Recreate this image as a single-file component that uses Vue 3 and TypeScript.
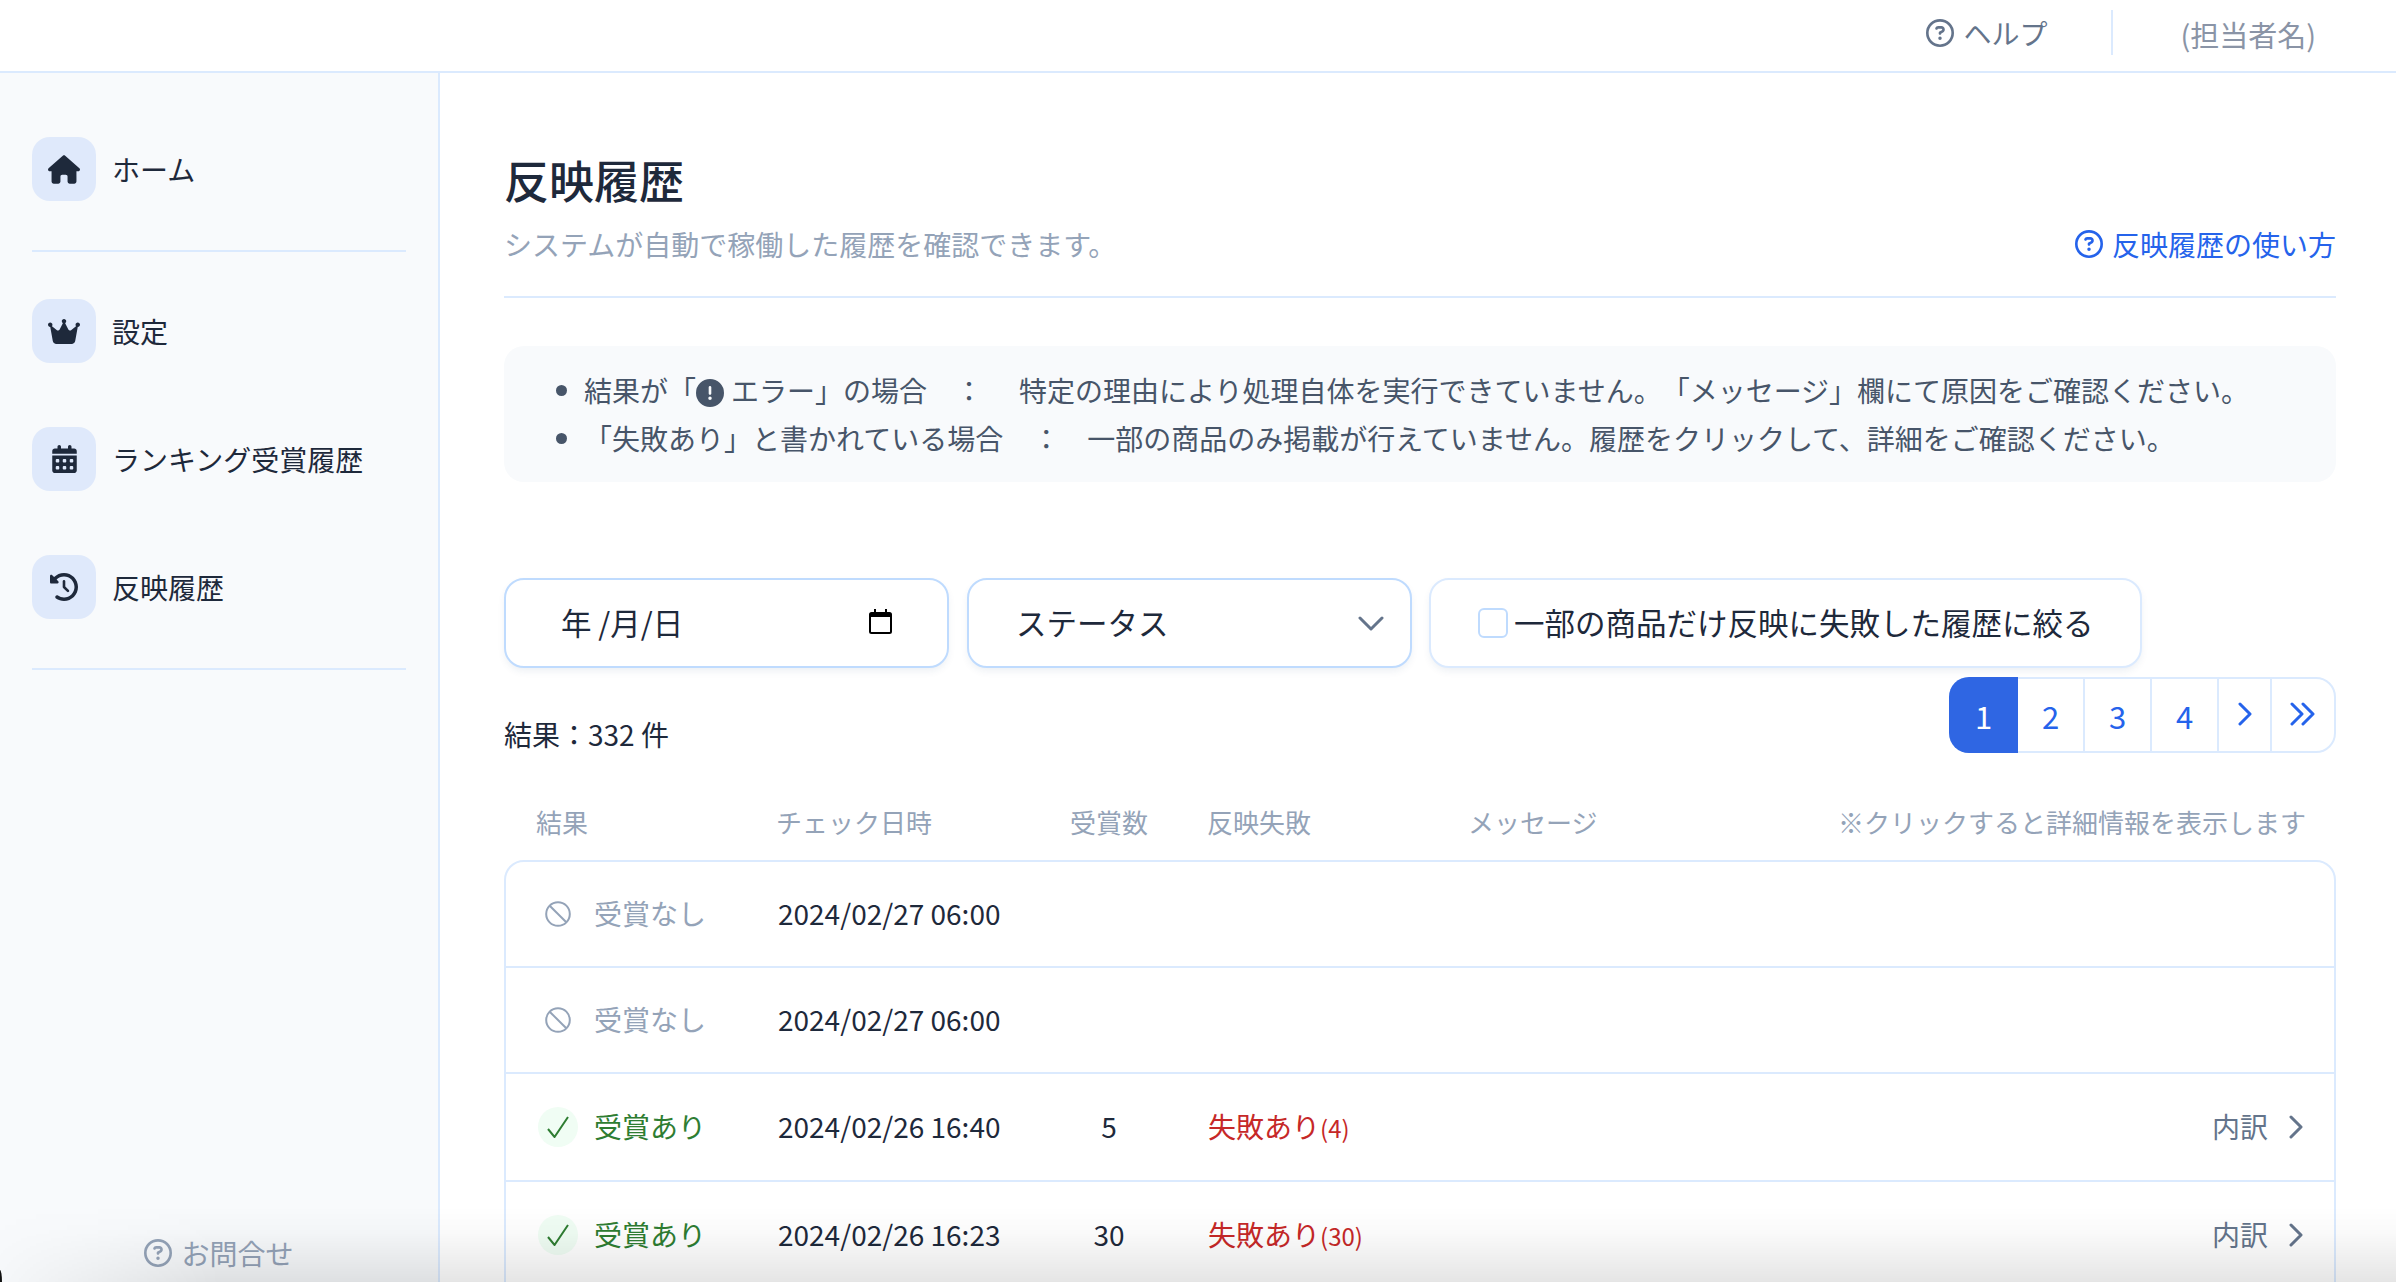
<script setup lang="ts">
interface Row {
  won: boolean
  date: string
  count?: number
  failed?: number
}
const rows: Row[] = [
  { won: false, date: '2024/02/27 06:00' },
  { won: false, date: '2024/02/27 06:00' },
  { won: true, date: '2024/02/26 16:40', count: 5, failed: 4 },
  { won: true, date: '2024/02/26 16:23', count: 30, failed: 30 },
]
const question =
  'M464 256A208 208 0 1 0 48 256a208 208 0 1 0 416 0zM0 256a256 256 0 1 1 512 0A256 256 0 1 1 0 256zm169.8-90.7c7.9-22.3 29.1-37.3 52.8-37.3h58.3c34.9 0 63.1 28.3 63.1 63.1c0 22.6-12.1 43.5-31.7 54.8L280 264.4c-.2 13-10.9 23.6-24 23.6c-13.3 0-24-10.7-24-24V250.5c0-8.6 4.6-16.5 12.1-20.8l44.3-25.4c4.7-2.7 7.6-7.7 7.6-13.1c0-8.4-6.8-15.1-15.1-15.1H222.6c-3.4 0-6.4 2.1-7.5 5.3l-.4 1.2c-4.4 12.5-18.2 19-30.6 14.6s-19-18.2-14.6-30.6l.4-1.2zM224 352a32 32 0 1 1 64 0 32 32 0 1 1 -64 0z'
const pages = ['1', '2', '3', '4']
</script>

<template>
  <div class="page">
    <header class="topbar">
      <a class="help">
        <svg class="q" viewBox="0 0 512 512"><path :d="question" fill="currentColor" /></svg>
        <span>ヘルプ</span>
      </a>
      <div class="vr"></div>
      <div class="user">(担当者名)</div>
    </header>

    <div class="body">
      <aside class="sidebar">
        <a class="nav">
          <span class="nav-ico"><svg class="i-wide" viewBox="0 0 576 512"><path fill="currentColor" d="M575.8 255.5c0 18-15 32.1-32 32.1h-32l.7 160.2c0 2.7-.2 5.4-.5 8.1V472c0 22.1-17.9 40-40 40H456c-1.1 0-2.2 0-3.3-.1c-1.4 .1-2.8 .1-4.2 .1H416 392c-22.1 0-40-17.9-40-40V448 384c0-17.7-14.3-32-32-32H256c-17.7 0-32 14.3-32 32v64 24c0 22.1-17.9 40-40 40H160 128.1c-1.5 0-3-.1-4.5-.2c-1.2 .1-2.4 .2-3.6 .2H104c-22.1 0-40-17.9-40-40V360c0-.9 0-1.9 .1-2.8V287.6H32c-18 0-32-14-32-32.1c0-9 3-17 10-24L266.4 8c7-7 15-8 22-8s15 2 21 7L564.8 231.5c8 7 12 15 11 24z" /></svg></span>
          <span>ホーム</span>
        </a>
        <div class="hr first"></div>
        <div class="nav-group">
          <a class="nav">
            <span class="nav-ico"><svg class="i-wide" viewBox="0 0 576 512"><path fill="currentColor" d="M309 106c11.4-7 19-19.7 19-34c0-22.1-17.9-40-40-40s-40 17.9-40 40c0 14.4 7.6 27 19 34L209.7 220.6c-9.1 18.2-32.7 23.4-48.6 10.7L72 160c5-6.7 8-15 8-24c0-22.1-17.9-40-40-40S0 113.9 0 136s17.9 40 40 40c.2 0 .5 0 .7 0L86.4 427.4c5.5 30.4 32 52.6 63 52.6H426.6c30.9 0 57.4-22.1 63-52.6L535.3 176c.2 0 .5 0 .7 0c22.1 0 40-17.9 40-40s-17.9-40-40-40s-40 17.9-40 40c0 9 3 17.3 8 24l-89.1 71.3c-15.9 12.7-39.5 7.5-48.6-10.7L309 106z" /></svg></span>
            <span>設定</span>
          </a>
          <a class="nav">
            <span class="nav-ico"><svg class="i-cal" viewBox="0 0 448 512"><path fill="currentColor" d="M128 0c17.7 0 32 14.3 32 32V64H288V32c0-17.7 14.3-32 32-32s32 14.3 32 32V64h48c26.5 0 48 21.5 48 48v48H0V112C0 85.5 21.5 64 48 64H96V32c0-17.7 14.3-32 32-32zM0 192H448V464c0 26.5-21.5 48-48 48H48c-26.5 0-48-21.5-48-48V192zm64 80v32c0 8.8 7.2 16 16 16h32c8.8 0 16-7.2 16-16V272c0-8.8-7.2-16-16-16H80c-8.8 0-16 7.2-16 16zm128 0v32c0 8.8 7.2 16 16 16h32c8.8 0 16-7.2 16-16V272c0-8.8-7.2-16-16-16H208c-8.8 0-16 7.2-16 16zm144-16c-8.8 0-16 7.2-16 16v32c0 8.8 7.2 16 16 16h32c8.8 0 16-7.2 16-16V272c0-8.8-7.2-16-16-16H336zM64 400v32c0 8.8 7.2 16 16 16h32c8.8 0 16-7.2 16-16V400c0-8.8-7.2-16-16-16H80c-8.8 0-16 7.2-16 16zm144-16c-8.8 0-16 7.2-16 16v32c0 8.8 7.2 16 16 16h32c8.8 0 16-7.2 16-16V400c0-8.8-7.2-16-16-16H208zm112 16v32c0 8.8 7.2 16 16 16h32c8.8 0 16-7.2 16-16V400c0-8.8-7.2-16-16-16H336c-8.8 0-16 7.2-16 16z" /></svg></span>
            <span>ランキング受賞履歴</span>
          </a>
          <a class="nav">
            <span class="nav-ico"><svg class="i-hist" viewBox="0 0 512 512"><path fill="currentColor" d="M75 75L41 41C25.9 25.9 0 36.6 0 57.9V168c0 13.3 10.7 24 24 24H134.1c21.4 0 32.1-25.9 17-41l-30.8-30.8C155 85.5 203 64 256 64c106 0 192 86 192 192s-86 192-192 192c-40.8 0-78.6-12.7-109.7-34.4c-14.5-10.1-34.4-6.6-44.6 7.9s-6.6 34.4 7.9 44.6C151.2 495 201.7 512 256 512c141.4 0 256-114.6 256-256S397.4 0 256 0C185.3 0 121.3 28.7 75 75zm181 53c-13.3 0-24 10.7-24 24V256c0 6.4 2.5 12.5 7 17l72 72c9.4 9.4 24.6 9.4 33.9 0s9.4-24.6 0-33.9l-65-65V152c0-13.3-10.7-24-24-24z" /></svg></span>
            <span>反映履歴</span>
          </a>
        </div>
        <div class="hr last"></div>
        <a class="contact">
          <svg class="q" viewBox="0 0 512 512"><path :d="question" fill="currentColor" /></svg>
          <span>お問合せ</span>
        </a>
      </aside>

      <main class="main">
        <h1 class="title">反映履歴</h1>
        <div class="subrow">
          <p class="sub">システムが自動で稼働した履歴を確認できます。</p>
          <a class="howto">
            <svg class="q" viewBox="0 0 512 512"><path :d="question" fill="currentColor" /></svg>
            <span>反映履歴の使い方</span>
          </a>
        </div>

        <ul class="notice">
          <li>
            <span>結果が「<svg class="err" viewBox="0 0 512 512"><path fill="currentColor" d="M256 512A256 256 0 1 0 256 0a256 256 0 1 0 0 512zm0-384c13.3 0 24 10.7 24 24V264c0 13.3-10.7 24-24 24s-24-10.7-24-24V152c0-13.3 10.7-24 24-24zM224 352a32 32 0 1 1 64 0 32 32 0 1 1 -64 0z" /></svg>エラー」の場合</span>
            <span class="colon first-colon">：</span>
            <span>特定の理由により処理自体を実行できていません。「メッセージ」欄にて原因をご確認ください。</span>
          </li>
          <li>
            <span>「失敗あり」と書かれている場合</span>
            <span class="colon">：</span>
            <span>一部の商品のみ掲載が行えていません。履歴をクリックして、詳細をご確認ください。</span>
          </li>
        </ul>

        <div class="filters">
          <div class="field date">
            <span class="label">年 /月/日</span>
            <svg class="cal" viewBox="0 0 23 25"><path d="M5 0h2v3h9V0h2v3h2.5A2.5 2.5 0 0 1 23 5.500v17a2.500 2.500 0 0 1-2.500 2.500h-18A2.500 2.500 0 0 1 0 22.500v-17A2.500 2.500 0 0 1 2.500 3H5zM2 8v14.500a.5.5 0 0 0 .5.5h18a.5.5 0 0 0 .5-.5V8z" fill="#000" /></svg>
          </div>
          <div class="field status">
            <span class="label">ステータス</span>
            <svg class="caret" viewBox="0 0 26 15"><path d="M2 2l11 11L24 2" fill="none" stroke="#64748b" stroke-width="3" stroke-linecap="round" stroke-linejoin="round" /></svg>
          </div>
          <label class="field check">
            <span class="box"></span>
            <span class="label">一部の商品だけ反映に失敗した履歴に絞る</span>
          </label>
        </div>

        <div class="resultbar">
          <div class="count">結果：332 件</div>
          <nav class="pager">
            <a v-for="(p, i) in pages" :key="p" class="cell" :class="{ active: i === 0 }">{{ p }}</a>
            <a class="cell next">
              <svg viewBox="0 0 14 24"><path d="M2 2l10 10L2 22" fill="none" stroke="currentColor" stroke-width="3" stroke-linecap="round" stroke-linejoin="round" /></svg>
            </a>
            <a class="cell last">
              <svg viewBox="0 0 26 24"><path d="M2 2l10 10L2 22M13 2l10 10-10 10" fill="none" stroke="currentColor" stroke-width="3" stroke-linecap="round" stroke-linejoin="round" /></svg>
            </a>
          </nav>
        </div>

        <div class="thead">
          <div class="h1">結果</div>
          <div>チェック日時</div>
          <div class="center">受賞数</div>
          <div class="h4">反映失敗</div>
          <div>メッセージ</div>
          <div class="right">※クリックすると詳細情報を表示します</div>
        </div>

        <div class="table">
          <div v-for="(r, i) in rows" :key="i" class="row" :class="{ won: r.won }">
            <div class="result">
              <span class="state">
                <svg v-if="!r.won" class="ban" viewBox="0 0 26 26"><circle cx="13" cy="13" r="11.800" fill="none" stroke="currentColor" stroke-width="2" /><path d="M4.700 4.700l16.600 16.600" stroke="currentColor" stroke-width="2" /></svg>
                <svg v-else class="tick" viewBox="0 0 22 22"><path d="M1 13l6.500 8L21 1" fill="none" stroke="currentColor" stroke-width="2" /></svg>
              </span>
              <span class="lift">{{ r.won ? '受賞あり' : '受賞なし' }}</span>
            </div>
            <div class="when lift">{{ r.date }}</div>
            <div class="center num lift">{{ r.count }}</div>
            <div class="fail lift"><template v-if="r.failed">失敗あり<small>({{ r.failed }})</small></template></div>
            <div></div>
            <div class="detail" v-if="r.won">
              <span class="lift">内訳</span>
              <svg viewBox="0 0 14 24"><path d="M2 2l10 10L2 22" fill="none" stroke="currentColor" stroke-width="3" stroke-linecap="round" stroke-linejoin="round" /></svg>
            </div>
          </div>
        </div>
      </main>
    </div>
    <div class="fade"></div>
    <div class="corner"></div>
  </div>
</template>

<style>
html,
body {
  margin: 0;
  background: #fff;
}
</style>

<style scoped>
.page {
  position: relative;
  width: 2396px;
  height: 1282px;
  overflow: hidden;
  background: #fff;
  display: flex;
  flex-direction: column;
  font-family: "Noto Sans CJK JP", "Noto Sans", sans-serif;
  font-size: 28px;
  text-spacing-trim: space-all;
  color: #1e293b;
}
a {
  color: inherit;
}
.q {
  width: 28px;
  height: 28px;
  flex: none;
}
.lift {
  margin-bottom: 2px;
}

/* top bar */
.topbar {
  flex: none;
  height: 73px;
  box-sizing: border-box;
  border-bottom: 2px solid #dbeafe;
  display: flex;
  align-items: flex-start;
  justify-content: flex-end;
}
.help {
  display: flex;
  align-items: center;
  gap: 9px;
  height: 66px;
  color: #64748b;
}
.vr {
  width: 2px;
  height: 45px;
  margin: 10px 67px 0 64px;
  background: #dbeafe;
}
.user {
  height: 68px;
  line-height: 68px;
  margin-right: 80px;
  font-size: 29px;
  color: #8a94a6;
}

/* layout */
.body {
  flex: 1;
  display: flex;
  min-height: 0;
}
.sidebar {
  width: 440px;
  flex: none;
  box-sizing: border-box;
  border-right: 2px solid #dbeafe;
  background: #f8fafc;
  padding: 64px 32px 0;
  display: flex;
  flex-direction: column;
}
.nav {
  display: flex;
  align-items: center;
  gap: 16px;
  height: 64px;
}
.nav-ico {
  width: 64px;
  height: 64px;
  border-radius: 18px;
  background: #dfe9fb;
  display: flex;
  align-items: center;
  justify-content: center;
  color: #1e293b;
}
.i-wide {
  width: 32px;
  height: 29px;
}
.i-cal {
  width: 25px;
  height: 28px;
}
.i-hist {
  width: 28px;
  height: 28px;
}
.hr {
  height: 2px;
  background: #dbeafe;
}
.hr.first {
  margin: 49px 0 47px;
}
.hr.last {
  margin-top: 49px;
}
.nav-group {
  display: flex;
  flex-direction: column;
  gap: 64px;
}
.contact {
  margin-top: auto;
  margin-bottom: 9px;
  align-self: center;
  display: flex;
  align-items: center;
  gap: 9px;
  color: #94a3b8;
}

.main {
  flex: 1;
  min-width: 0;
  padding: 77px 60px 0 64px;
}
.title {
  margin: 0;
  font-size: 45px;
  font-weight: 500;
  line-height: 60px;
  color: #1e293b;
}
.subrow {
  margin-top: 14px;
  height: 72px;
  border-bottom: 2px solid #dbeafe;
  display: flex;
  align-items: flex-start;
  justify-content: space-between;
  line-height: 40px;
}
.sub {
  margin: 0;
  color: #94a3b8;
}
.howto {
  display: flex;
  align-items: center;
  gap: 9px;
  color: #2563eb;
}

/* notice */
.notice {
  margin: 48px 0 0;
  padding: 20px 0 20px 58px;
  border-radius: 20px;
  background: #f8fafc;
  color: #475569;
  line-height: 48px;
  list-style: none;
}
.notice li {
  position: relative;
  display: flex;
  white-space: nowrap;
  padding-left: 22px;
}
.notice li::before {
  content: "";
  position: absolute;
  left: -6px;
  top: 19px;
  width: 11px;
  height: 11px;
  border-radius: 50%;
  background: #475569;
}
.err {
  width: 28px;
  height: 28px;
  margin: 0 7px 0 0;
  vertical-align: -5px;
}
.colon {
  margin: 0 27px 0 29px;
}
.first-colon {
  margin: 0 36px 0 28px;
}

/* filters */
.filters {
  margin-top: 96px;
  display: flex;
  gap: 18px;
}
.field {
  height: 90px;
  box-sizing: border-box;
  background: #fff;
  border: 2px solid #bfdbfe;
  border-radius: 20px;
  box-shadow: 0 4px 8px -2px rgba(30, 64, 120, 0.1);
  display: flex;
  align-items: center;
  font-size: 30.5px;
  color: #1e293b;
}
.label {
  margin-bottom: 2px;
}
.date {
  width: 445px;
  padding: 0 55px;
  justify-content: space-between;
}
.cal {
  width: 23px;
  height: 25px;
  margin-top: -4px;
}
.status {
  width: 445px;
  padding: 0 26px 0 47px;
  justify-content: space-between;
}
.caret {
  width: 26px;
  height: 15px;
}
.check {
  width: 713px;
  margin-left: -1px;
  border-color: #dbeafe;
  padding-left: 47px;
  gap: 6px;
}
.box {
  width: 30px;
  height: 30px;
  box-sizing: border-box;
  border: 2px solid #bfdbfe;
  border-radius: 6px;
  flex: none;
}

/* result + pager */
.resultbar {
  margin-top: 9px;
  display: flex;
  justify-content: space-between;
  align-items: flex-end;
}
.count {
  line-height: 40px;
  margin-bottom: -1px;
}
.pager {
  width: 387px;
  height: 76px;
  box-sizing: border-box;
  border: 2px solid #dbeafe;
  border-radius: 20px;
  display: flex;
  color: #2563eb;
  font-size: 31px;
}
.cell {
  width: 67px;
  margin: -2px 0;
  display: flex;
  align-items: center;
  justify-content: center;
  border-right: 2px solid #dbeafe;
  box-sizing: border-box;
}
.cell.active {
  width: 69px;
  margin-left: -2px;
  border: none;
  background: #2f66e3;
  color: #fff;
  border-radius: 20px 0 0 20px;
}
.cell.next {
  width: 53px;
}
.cell.next svg {
  width: 14px;
  height: 24px;
  margin-top: -3px;
}
.cell.last {
  flex: 1;
  border-right: none;
}
.cell.last svg {
  width: 26px;
  height: 24px;
  margin-top: -3px;
}

/* table */
.thead,
.row {
  display: grid;
  grid-template-columns: 270px 284px 98px 310px 1fr auto;
  align-items: center;
}
.thead {
  margin-top: 39px;
  height: 58px;
  padding: 0 30px 2px 2px;
  font-size: 26px;
  color: #94a3b8;
}
.h1 {
  padding-left: 30px;
}
.h4 {
  padding-left: 49px;
}
.center {
  text-align: center;
}
.right {
  text-align: right;
}
.table {
  margin-top: 8px;
  border: 2px solid #dbeafe;
  border-radius: 20px 20px 0 0;
}
.row {
  height: 104px;
  padding-right: 31px;
  border-bottom: 2px solid #dbeafe;
}
.row.won {
  height: 106px;
}
.result {
  display: flex;
  align-items: center;
  gap: 16px;
  padding-left: 32px;
  color: #94a3b8;
}
.row.won .result {
  color: #2e7d32;
}
.state {
  width: 40px;
  height: 40px;
  border-radius: 50%;
  display: flex;
  align-items: center;
  justify-content: center;
}
.row.won .state {
  background: #f0fdf4;
}
.ban {
  width: 26px;
  height: 26px;
}
.tick {
  width: 22px;
  height: 22px;
}
.when {
  padding-left: 2px;
}
.fail {
  padding-left: 50px;
  color: #c62828;
}
.fail small {
  font-size: 24px;
}
.detail {
  display: flex;
  align-items: center;
  gap: 21px;
  color: #64748b;
}
.detail svg {
  width: 14px;
  height: 24px;
}

/* photo edge */
.fade {
  position: absolute;
  left: 0;
  right: 0;
  bottom: 0;
  height: 76px;
  pointer-events: none;
  background: linear-gradient(to bottom, rgba(0, 0, 0, 0), rgba(0, 0, 0, 0.02) 35%, rgba(0, 0, 0, 0.1));
  -webkit-mask-image: linear-gradient(to right, rgba(0, 0, 0, 0.1), #000 220px);
  mask-image: linear-gradient(to right, rgba(0, 0, 0, 0.1), #000 220px);
}
.corner {
  position: absolute;
  left: 0;
  bottom: 0;
  width: 2px;
  height: 12px;
  background: #111;
  border-radius: 0 100% 0 0;
}
</style>
